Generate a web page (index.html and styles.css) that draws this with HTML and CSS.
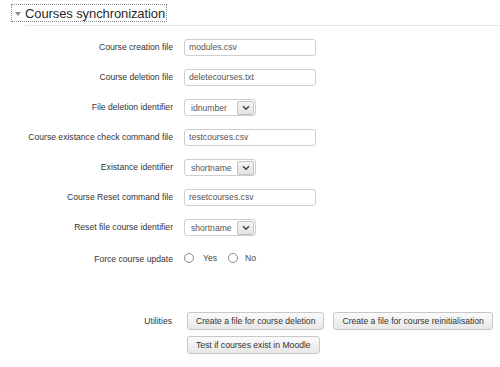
FILE: index.html
```html
<!DOCTYPE html>
<html>
<head>
<meta charset="utf-8">
<link rel="stylesheet" href="styles.css">
</head>
<body>
<div class="section">
  <div class="legend-wrap">
    <div class="legend">
      <svg class="tri" width="6" height="4" viewBox="0 0 6 4"><path d="M0 0 L6 0 L3 4 Z" fill="#888"/></svg>
      <span>Courses synchronization</span>
    </div>
  </div>
  <div class="rule"></div>

  <div class="form">
    <label class="lbl">Course creation file</label>
    <div class="input">modules.csv</div>

    <label class="lbl">Course deletion file</label>
    <div class="input">deletecourses.txt</div>

    <label class="lbl">File deletion identifier</label>
    <div class="select"><span class="sel-text">idnumber</span><span class="arrow"><svg width="8" height="6" viewBox="0 0 8 6"><path d="M1 1.2 L4 4.2 L7 1.2" fill="none" stroke="#444" stroke-width="1.6"/></svg></span></div>

    <label class="lbl">Course existance check command file</label>
    <div class="input">testcourses.csv</div>

    <label class="lbl">Existance identifier</label>
    <div class="select"><span class="sel-text">shortname</span><span class="arrow"><svg width="8" height="6" viewBox="0 0 8 6"><path d="M1 1.2 L4 4.2 L7 1.2" fill="none" stroke="#444" stroke-width="1.6"/></svg></span></div>

    <label class="lbl">Course Reset command file</label>
    <div class="input">resetcourses.csv</div>

    <label class="lbl">Reset file course identifier</label>
    <div class="select"><span class="sel-text">shortname</span><span class="arrow"><svg width="8" height="6" viewBox="0 0 8 6"><path d="M1 1.2 L4 4.2 L7 1.2" fill="none" stroke="#444" stroke-width="1.6"/></svg></span></div>

    <label class="lbl lbl-low">Force course update</label>
    <div class="radios">
      <span class="radio"></span><span class="rtext">Yes</span>
      <span class="radio r2"></span><span class="rtext">No</span>
    </div>
  </div>

  <div class="utilities">
    <div class="lbl util-lbl">Utilities</div>
    <div class="buttons">
      <button class="btn">Create a file for course deletion</button>
      <button class="btn">Create a file for course reinitialisation</button>
      <button class="btn">Test if courses exist in Moodle</button>
    </div>
  </div>
</div>
</body>
</html>
```
FILE: styles.css
```css
html, body {
  margin: 0;
  padding: 0;
  background: #ffffff;
  font-family: "Liberation Sans", Arial, sans-serif;
  color: #333;
}
.section {
  width: 500px;
}
.legend-wrap {
  display: flex;
  padding: 4px 0 0 11px;
}
.legend {
  display: flex;
  align-items: center;
  height: 16px;
  border: 1px dotted #8a8a8a;
  padding: 0 1px 0 3px;
  font-size: 13px;
  letter-spacing: -0.1px;
  color: #2a2a2a;
}
.tri {
  margin: 1px 4px 0 0;
}
.rule {
  margin: 3px 0 0 25px;
  border-top: 1px solid #e6e6e6;
}
.form {
  display: grid;
  grid-template-columns: 173px 1fr;
  grid-auto-rows: 17px;
  column-gap: 11px;
  row-gap: 13px;
  align-items: center;
  margin-top: 13px;
}
.lbl {
  text-align: right;
  font-size: 8.6px;
  line-height: 11px;
  color: #333;
}
.lbl-low {
  padding-top: 3px;
}
.input {
  box-sizing: border-box;
  width: 132px;
  height: 17px;
  border: 1px solid #cfcfcf;
  border-radius: 3px;
  padding-left: 4px;
  font-size: 8.6px;
  line-height: 15px;
  color: #555;
}
.select {
  box-sizing: border-box;
  width: 72px;
  height: 17px;
  border: 1px solid #cfcfcf;
  border-radius: 3px;
  display: flex;
  align-items: center;
  justify-content: space-between;
  padding: 0 1px 0 6px;
  font-size: 8.6px;
  color: #555;
}
.arrow {
  box-sizing: border-box;
  width: 17px;
  height: 14px;
  border: 1px solid #c4c4c4;
  border-radius: 2px;
  background: linear-gradient(#f4f4f4, #e4e4e4);
  display: flex;
  align-items: center;
  justify-content: center;
}
.radios {
  display: flex;
  align-items: center;
  height: 17px;
  font-size: 8.6px;
  color: #444;
}
.radio {
  box-sizing: border-box;
  width: 10px;
  height: 10px;
  border: 1px solid #8a8a8a;
  border-radius: 50%;
  background: #fff;
  margin-right: 9px;
}
.r2 {
  margin-left: 11px;
  margin-right: 7px;
}
.utilities {
  display: grid;
  grid-template-columns: 172px 1fr;
  column-gap: 12px;
  margin-top: 46px;
}
.util-lbl {
  line-height: 18px;
}
.buttons {
  display: flex;
  flex-wrap: wrap;
  gap: 6px 9px;
  padding-left: 3px;
}
.btn {
  box-sizing: border-box;
  height: 18px;
  padding: 0 8px;
  font-family: "Liberation Sans", Arial, sans-serif;
  font-size: 8.6px;
  color: #333;
  border: 1px solid #c8c8c8;
  border-radius: 3px;
  background: linear-gradient(#fafafa, #e8e8e8);
}
```
